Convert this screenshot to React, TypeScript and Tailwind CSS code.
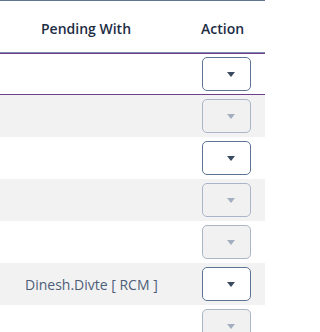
import React from "react";

type Row = { pendingWith?: string; enabled: boolean };

const rows: Row[] = [
  { enabled: true },
  { enabled: false },
  { enabled: true },
  { enabled: false },
  { enabled: false },
  { pendingWith: "Dinesh.Divte [ RCM ]", enabled: true },
  { enabled: false },
];

function ActionSelect({ enabled }: { enabled: boolean }) {
  return (
    <div
      className={
        enabled
          ? "flex h-[34px] w-[49px] items-center justify-end rounded-[5px] border border-[#5d7592] bg-white pr-[15px]"
          : "flex h-[34px] w-[49px] items-center justify-end rounded-[5px] border border-[#aab6c7] bg-[#f1f1f1] pr-[15px]"
      }
    >
      <svg width="8" height="5" viewBox="0 0 8 5">
        <path d="M0 0 L8 0 L4 5 Z" fill={enabled ? "#3a4a60" : "#a3afc0"} />
      </svg>
    </div>
  );
}

export default function App() {
  return (
    <div
      className="w-[265px] h-[332px] overflow-hidden bg-white"
      style={{ fontFamily: '"Open Sans", "Noto Sans", sans-serif' }}
    >
      <div className="border-t border-[#5f7590]">
        <div className="flex h-[52px] items-center border-b border-[#7d8ea6] pt-[3px] text-[14px] font-semibold text-[#1d2d45]">
          <div className="w-[190px] pl-[41px]">Pending With</div>
          <div className="pl-[11px]">Action</div>
        </div>
        {rows.map((row, i) => (
          <div
            key={i}
            className={
              i === 0
                ? "flex h-[42px] items-center border-y border-[#6e3e8e] bg-white"
                : i % 2 === 1
                  ? "flex h-[42px] items-center bg-[#f2f2f2]"
                  : "flex h-[42px] items-center bg-white"
            }
          >
            <div className="w-[202px] pl-[25px] text-[14px] text-[#4e5e78]">
              {row.pendingWith ?? ""}
            </div>
            <ActionSelect enabled={row.enabled} />
          </div>
        ))}
      </div>
    </div>
  );
}
